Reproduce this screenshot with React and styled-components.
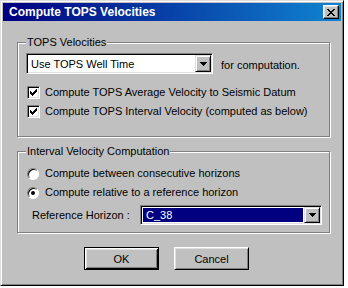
import React from "react";
import styled, { createGlobalStyle } from "styled-components";

const GlobalStyle = createGlobalStyle`
  body {
    margin: 0;
    background: #ffffff;
    font-family: "Liberation Sans", Arial, sans-serif;
    font-size: 11px;
  }
`;

const Window = styled.div`
  box-sizing: border-box;
  width: 344px;
  height: 286px;
  background: #c0c0c0;
  border: 1px solid;
  border-color: #dfdfdf #000 #000 #dfdfdf;
  box-shadow: inset 1px 1px #fff, inset -1px -1px #808080;
  padding: 2px;
  display: flex;
  flex-direction: column;
  color: #000;
`;

const TitleBar = styled.div`
  height: 18px;
  display: flex;
  align-items: center;
  justify-content: space-between;
  padding: 0 2px 0 6px;
  background: linear-gradient(to right, #000080, #1084d0);
  color: #fff;
  font-weight: bold;
  font-size: 12px;
`;

const CloseButton = styled.div`
  box-sizing: border-box;
  width: 16px;
  height: 14px;
  background: #c0c0c0;
  border: 1px solid;
  border-color: #fff #000 #000 #fff;
  box-shadow: inset -1px -1px #808080, inset 1px 1px #dfdfdf;
  display: flex;
  align-items: center;
  justify-content: center;
`;

const Content = styled.div`
  padding: 21px 10px 0 14px;
  display: flex;
  flex-direction: column;
`;

const GroupBox = styled.div`
  position: relative;
  box-sizing: border-box;
  height: ${(p) => p.$height}px;
  margin-top: ${(p) => p.$top || 0}px;
  margin-right: 1px;
  border: 1px solid #808080;
  box-shadow: inset 1px 1px #fff, 1px 1px #fff;
  padding: ${(p) => p.$pad};
  display: flex;
  flex-direction: column;
`;

const Legend = styled.span`
  position: absolute;
  top: -7px;
  left: 8px;
  padding: 0 1px;
  line-height: 13px;
  background: #c0c0c0;
`;

const Row = styled.div`
  display: flex;
  align-items: ${(p) => p.$align || "center"};
  margin-top: ${(p) => p.$top || 0}px;
  margin-left: ${(p) => p.$left || 0}px;
  gap: ${(p) => p.$gap || 0}px;
`;

const Combo = styled.div`
  box-sizing: border-box;
  width: ${(p) => p.$width}px;
  height: ${(p) => p.$height}px;
  border: 1px solid;
  border-color: #808080 #fff #fff #808080;
  box-shadow: inset 1px 1px #000, inset -1px -1px #dfdfdf;
  background: #fff;
  padding: 1px;
  display: flex;
`;

const ComboField = styled.div`
  flex: 1;
  display: flex;
  align-items: center;
  padding-left: 3px;
  margin: ${(p) => (p.$selected ? "1px" : "0")};
  background: ${(p) => (p.$selected ? "#000080" : "#fff")};
  color: ${(p) => (p.$selected ? "#fff" : "#000")};
`;

const ArrowButton = styled.div`
  box-sizing: border-box;
  width: 16px;
  background: #c0c0c0;
  border: 1px solid;
  border-color: #dfdfdf #000 #000 #dfdfdf;
  box-shadow: inset 1px 1px #fff, inset -1px -1px #808080;
  display: flex;
  align-items: center;
  justify-content: center;
`;

const Label = styled.span`
  line-height: 13px;
  padding-top: ${(p) => p.$drop || 0}px;
  margin-left: ${(p) => p.$left || 0}px;
  width: ${(p) => (p.$width ? `${p.$width}px` : "auto")};
`;

const CheckBox = styled.div`
  box-sizing: border-box;
  width: 13px;
  height: 13px;
  border: 1px solid;
  border-color: #808080 #fff #fff #808080;
  box-shadow: inset 1px 1px #000, inset -1px -1px #dfdfdf;
  background: #fff;
  display: flex;
  align-items: center;
  justify-content: center;
`;

const Radio = styled.div`
  box-sizing: border-box;
  width: 12px;
  height: 12px;
  border-radius: 50%;
  border: 1px solid;
  border-color: #808080 #fff #fff #808080;
  background: #fff;
  display: flex;
  align-items: center;
  justify-content: center;
  box-shadow: inset 1px 1px #000;
`;

const Dot = styled.div`
  width: 4px;
  height: 4px;
  border-radius: 50%;
  background: #000;
`;

const ButtonRow = styled.div`
  display: flex;
  gap: 15px;
  margin-top: 14px;
  padding-left: 67px;
`;

const Button = styled.div`
  box-sizing: border-box;
  width: 75px;
  height: 23px;
  display: flex;
  align-items: center;
  justify-content: center;
  background: #c0c0c0;
  border: 1px solid;
  border-color: ${(p) => (p.$default ? "#000" : "#fff #000 #000 #fff")};
  box-shadow: ${(p) =>
    p.$default
      ? "inset 1px 1px #fff, inset -1px -1px #000, inset 2px 2px #dfdfdf, inset -2px -2px #808080"
      : "inset 1px 1px #dfdfdf, inset -1px -1px #808080"};
`;

const CheckMark = () => (
  <svg width="7" height="7" viewBox="0 0 7 7" shapeRendering="crispEdges">
    <path
      fill="#000"
      d="M0 2h1v3h-1z M1 3h1v3h-1z M2 4h1v3h-1z M3 3h1v3h-1z M4 2h1v3h-1z M5 1h1v3h-1z M6 0h1v3h-1z"
    />
  </svg>
);

const DownArrow = () => (
  <svg width="7" height="4" viewBox="0 0 7 4" shapeRendering="crispEdges">
    <path fill="#000" d="M0 0h7v1h-7z M1 1h5v1h-5z M2 2h3v1h-3z M3 3h1v1h-1z" />
  </svg>
);

const CloseGlyph = () => (
  <svg width="8" height="7" viewBox="0 0 8 7" shapeRendering="crispEdges">
    <path
      fill="#000"
      d="M0 0h2v1h-2z M6 0h2v1h-2z M1 1h2v1h-2z M5 1h2v1h-2z M2 2h4v1h-4z M3 3h2v1h-2z M2 4h4v1h-4z M1 5h2v1h-2z M5 5h2v1h-2z M0 6h2v1h-2z M6 6h2v1h-2z"
    />
  </svg>
);

const App = () => {
  return (
    <>
      <GlobalStyle />
      <Window>
        <TitleBar>
          <span>Compute TOPS Velocities</span>
          <CloseButton>
            <CloseGlyph />
          </CloseButton>
        </TitleBar>
        <Content>
          <GroupBox $height={95} $pad="10px 0 0 8px">
            <Legend>TOPS Velocities</Legend>
            <Row $align="flex-start">
              <Combo $width={187} $height={21}>
                <ComboField>Use TOPS Well Time</ComboField>
                <ArrowButton>
                  <DownArrow />
                </ArrowButton>
              </Combo>
              <Label $left={8} $drop={6}>for computation.</Label>
            </Row>
            <Row $top={12} $left={1} $gap={5}>
              <CheckBox>
                <CheckMark />
              </CheckBox>
              <Label>Compute TOPS Average Velocity to Seismic Datum</Label>
            </Row>
            <Row $top={6} $left={1} $gap={5}>
              <CheckBox>
                <CheckMark />
              </CheckBox>
              <Label>Compute TOPS Interval Velocity (computed as below)</Label>
            </Row>
          </GroupBox>

          <GroupBox $height={82} $top={14} $pad="15px 0 0 9px">
            <Legend>Interval Velocity Computation</Legend>
            <Row $gap={6}>
              <Radio />
              <Label>Compute between consecutive horizons</Label>
            </Row>
            <Row $top={6} $gap={6}>
              <Radio>
                <Dot />
              </Radio>
              <Label>Compute relative to a reference horizon</Label>
            </Row>
            <Row $top={6} $left={5}>
              <Label $width={108}>Reference Horizon :</Label>
              <Combo $width={182} $height={20}>
                <ComboField $selected>C_38</ComboField>
                <ArrowButton>
                  <DownArrow />
                </ArrowButton>
              </Combo>
            </Row>
          </GroupBox>

          <ButtonRow>
            <Button $default>OK</Button>
            <Button>Cancel</Button>
          </ButtonRow>
        </Content>
      </Window>
    </>
  );
};

export default App;
